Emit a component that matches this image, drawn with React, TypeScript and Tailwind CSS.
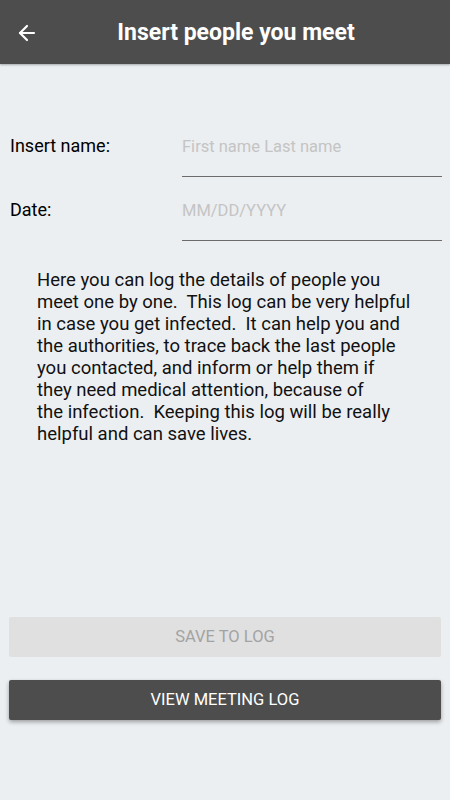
import { ArrowLeft } from "lucide-react";

const font = { fontFamily: "Roboto, 'Liberation Sans', sans-serif" };

function Field({ label, placeholder }: { label: string; placeholder: string }) {
  return (
    <div className="flex items-end">
      <div className="w-[172px] pb-[18px] text-[18px] text-black">{label}</div>
      <div className="flex-1 border-b border-[#6b6b6b] pb-[16px] text-[16.5px] text-[#c4c4c4]">
        {placeholder}
      </div>
    </div>
  );
}

export default function App() {
  return (
    <div className="flex h-[800px] w-[450px] flex-col bg-[#eceff1]" style={font}>
      <header className="relative flex h-16 items-center justify-center bg-[#4d4d4d] shadow-[0_1px_2px_rgba(0,0,0,0.3)]">
        <ArrowLeft className="absolute left-[15px] top-[21px] h-6 w-6 text-white" strokeWidth={2.2} />
        <h1 className="ml-[22px] mt-[2px] text-[23px] font-bold text-white">Insert people you meet</h1>
      </header>

      <div className="mt-[68px] flex flex-col gap-[19px] pl-[10px] pr-2">
        <Field label="Insert name:" placeholder="First name Last name" />
        <Field label="Date:" placeholder="MM/DD/YYYY" />
      </div>

      <p className="ml-[37px] mt-[28px] whitespace-pre-wrap text-[18.5px] leading-[22px] text-[#111]">
        {"Here you can log the details of people you\nmeet one by one.  This log can be very helpful\nin case you get infected.  It can help you and\nthe authorities, to trace back the last people\nyou contacted, and inform or help them if\nthey need medical attention, because of\nthe infection.  Keeping this log will be really\nhelpful and can save lives."}
      </p>

      <div className="mt-auto mb-[80px] flex flex-col gap-[23px] px-[9px]">
        <button className="h-10 rounded-[2px] bg-[#e0e0e0] text-[16.5px] uppercase text-[#a3a3a3]">
          Save to log
        </button>
        <button className="h-10 rounded-[2px] bg-[#4d4d4d] text-[16.5px] uppercase text-white shadow-[0_2px_4px_rgba(0,0,0,0.35)]">
          View meeting log
        </button>
      </div>
    </div>
  );
}
